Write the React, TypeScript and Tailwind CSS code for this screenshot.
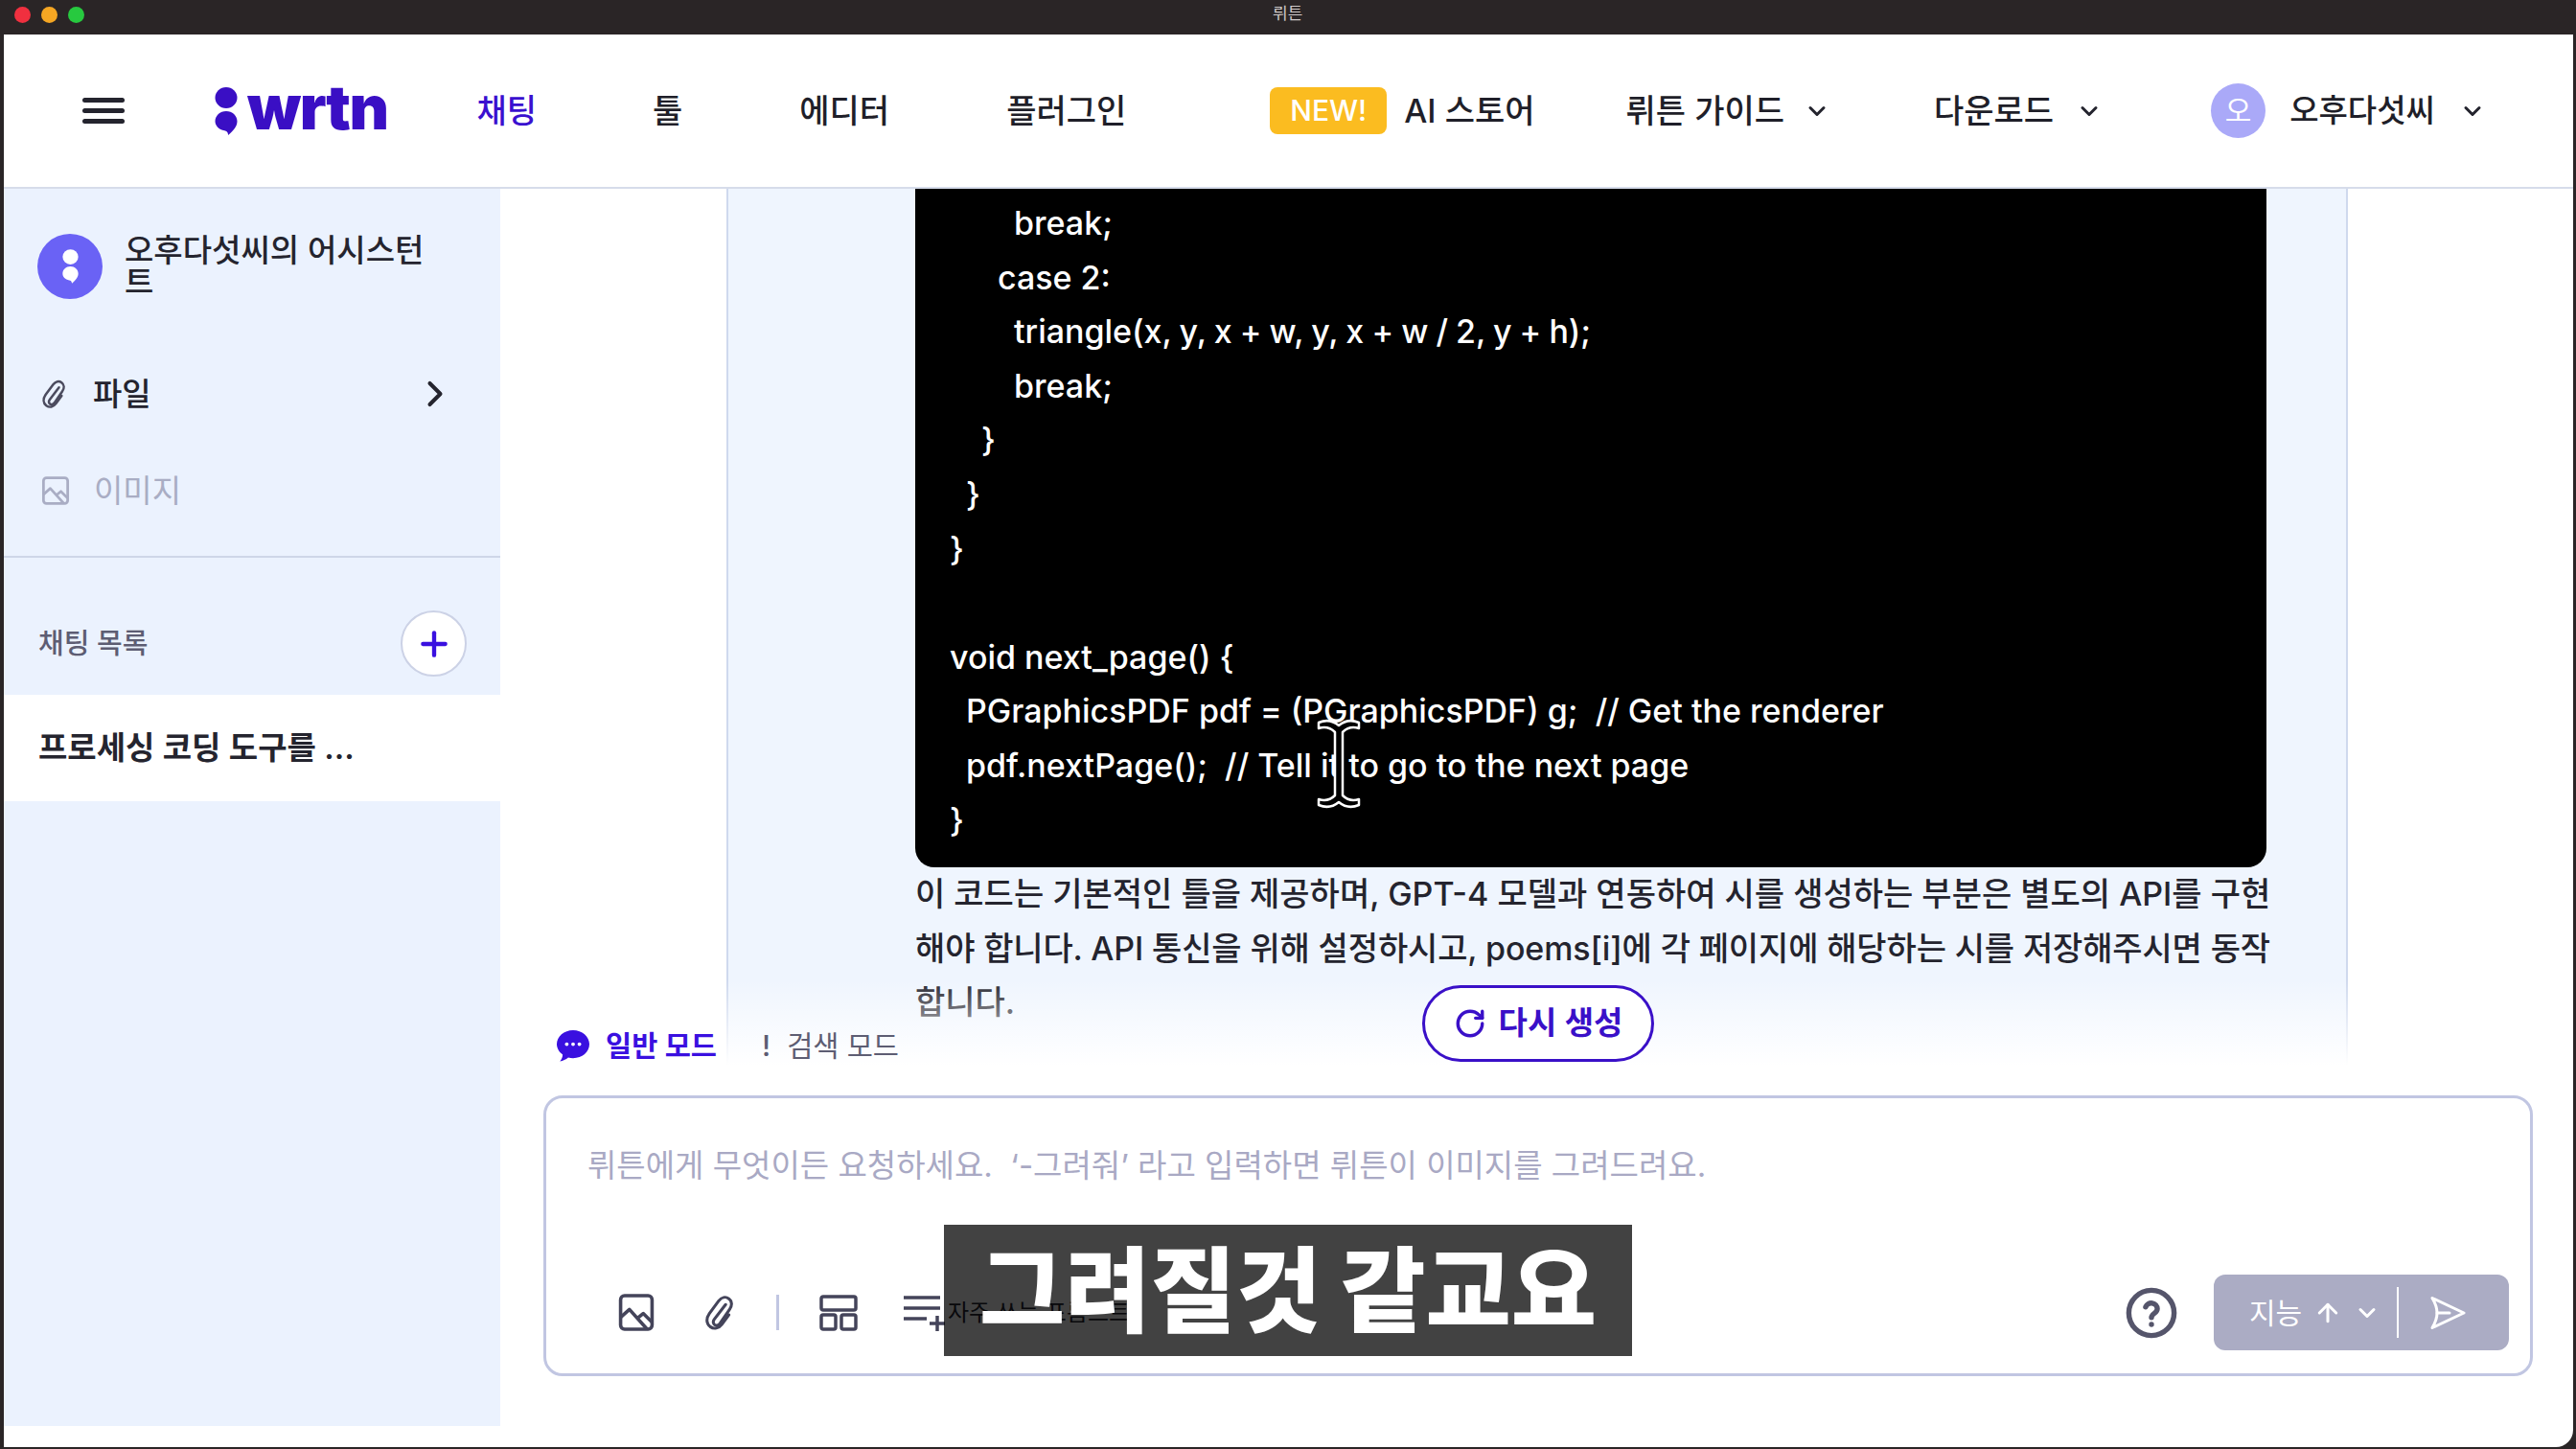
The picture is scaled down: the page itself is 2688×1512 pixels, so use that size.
import { ChevronDown, ChevronRight, Plus, RotateCw, ArrowUp } from 'lucide-react';

const FONT = 'font-["Inter","Noto_Sans_CJK_KR",sans-serif]';

const codeLines = [
  { text: 'break;', indent: 'pl-[67px]' },
  { text: 'case 2:', indent: 'pl-[50px]' },
  { text: 'triangle(x, y, x + w, y, x + w / 2, y + h);', indent: 'pl-[67px] [word-spacing:-1px]' },
  { text: 'break;', indent: 'pl-[67px]' },
  { text: '}', indent: 'pl-[33px]' },
  { text: '}', indent: 'pl-[17px]' },
  { text: '}', indent: 'pl-0' },
  { text: '\u00a0', indent: 'pl-0' },
  { text: 'void next_page() {', indent: 'pl-0' },
  { text: 'PGraphicsPDF pdf = (PGraphicsPDF) g;  // Get the renderer', indent: 'pl-[17px]' },
  { text: 'pdf.nextPage();  // Tell it to go to the next page', indent: 'pl-[17px]' },
  { text: '}', indent: 'pl-0' },
];

function Comma({ className, fill }: { className: string; fill: string }) {
  return (
    <svg viewBox="0 0 24 50" className={className} fill={fill}>
      <ellipse cx="12" cy="11" rx="11.5" ry="11" />
      <path d="M12 25c6.400 0 11.500 4.800 11.500 10.600 0 5.400-4 10-9.300 14.400-.5-3.300-1.700-4.400-4-4.700C4.300 44.300.5 40.300.5 35.600.5 29.800 5.600 25 12 25z" />
    </svg>
  );
}

function ImageIcon({ className, color }: { className: string; color: string }) {
  return (
    <svg viewBox="0 0 36 38" className={className} fill="none" stroke={color} strokeWidth="3.500" strokeLinejoin="round">
      <rect x="2" y="2" width="32" height="34" rx="4" />
      <path d="M2 24l9-8 18 20M19 25l6-5 9 9" />
    </svg>
  );
}

function ClipIcon({ className, color }: { className: string; color: string }) {
  return (
    <svg viewBox="0 0 30 38" className={className} fill="none" stroke={color} strokeWidth="3" strokeLinecap="round">
      <path d="M21 11L9.500 26c-1.800 2.400-1 4.600.5 5.600 1.600 1 3.700.6 5.300-1.500L25 16c3-4 2.500-8.500-.7-11-3.300-2.400-7.500-1.500-10.300 2.200L4.500 20c-3.500 5-3.200 10.500.8 13.500 4 2.800 8.800 1.800 12-2.500l7-9.500" />
    </svg>
  );
}

function NavItem({ label, className }: { label: string; className: string }) {
  return <span className={`text-[34px] font-medium leading-none text-[#1f1f29] ${className}`}>{label}</span>;
}

export default function App() {
  return (
    <div className={`relative flex h-[1512px] w-[2688px] flex-col overflow-hidden bg-[#2a2526] ${FONT}`}>
      {/* title bar */}
      <div className="relative flex h-9 shrink-0 items-center gap-[11px] pb-[5px] pl-[15px]">
        <span className="h-[17px] w-[17px] rounded-full bg-[#f0303f]" />
        <span className="h-[17px] w-[17px] rounded-full bg-[#f5a623]" />
        <span className="h-[17px] w-[17px] rounded-full bg-[#27c93f]" />
        <span className="absolute left-[1328px] top-[2px] text-[17px] leading-6 text-[#cfc9c9]">뤼튼</span>
      </div>

      <div className="ml-1 mr-[3px] flex h-[1474px] flex-col overflow-hidden rounded-br-[18px] bg-white">
        {/* header */}
        <header className="flex h-[161px] shrink-0 items-center border-b-2 border-[#d6dcea] bg-white">
          <div className="ml-[82px] flex h-[27px] w-11 flex-col justify-between">
            <span className="h-[5px] rounded-full bg-[#24242e]" />
            <span className="h-[5px] rounded-full bg-[#24242e]" />
            <span className="h-[5px] rounded-full bg-[#24242e]" />
          </div>
          <div className="ml-[94px] flex items-center">
            <Comma className="h-[50px] w-6" fill="#3a0fc4" />
            <span className="ml-[10px] mb-[8px] text-[64px] font-black leading-none tracking-[-1.500px] text-[#3a0fc4]">wrtn</span>
          </div>
          <span className="ml-[93px] text-[34px] font-medium leading-none text-[#3a10cf]">채팅</span>
          <NavItem label="툴" className="ml-[121px]" />
          <NavItem label="에디터" className="ml-[122px]" />
          <NavItem label="플러그인" className="ml-[122px]" />
          <span className="ml-[150px] flex h-[49px] w-[122px] items-center justify-center rounded-[8px] bg-[#fbbc20] text-[30px] font-medium text-white">NEW!</span>
          <NavItem label="AI 스토어" className="ml-[18px]" />
          <NavItem label="뤼튼 가이드" className="ml-[95px]" />
          <ChevronDown className="ml-[20px] h-7 w-7 text-[#24242e]" strokeWidth={2.600} />
          <NavItem label="다운로드" className="ml-[108px]" />
          <ChevronDown className="ml-[23px] h-7 w-7 text-[#24242e]" strokeWidth={2.600} />
          <span className="ml-[113px] flex h-[57px] w-[57px] items-center justify-center rounded-full bg-[#aaa9f8] text-[30px] text-white">오</span>
          <span className="ml-[25px] text-[33px] font-medium leading-none text-[#1f1f29]">오후다섯씨</span>
          <ChevronDown className="ml-[25px] h-7 w-7 text-[#24242e]" strokeWidth={2.600} />
        </header>

        <div className="flex flex-1">
          {/* sidebar */}
          <aside className="flex h-[1291px] w-[518px] shrink-0 flex-col bg-[#ebf2fe]">
            <div className="flex items-center pl-[35px] pt-[47px]">
              <span className="flex h-[68px] w-[68px] items-center justify-center rounded-full bg-[#6a62f5]">
                <Comma className="h-[36px] w-[17px]" fill="#ffffff" />
              </span>
              <p className="ml-[23px] w-[330px] text-[33px] font-medium leading-[33px] text-[#24242e]">오후다섯씨의 어시스턴트</p>
            </div>
            <div className="mt-[77px] flex items-center pl-[39px] pr-[46px]">
              <ClipIcon className="h-[32px] w-[27px]" color="#4b4b5e" />
              <span className="ml-[27px] text-[33px] font-medium leading-10 text-[#24242e]">파일</span>
              <ChevronRight className="ml-auto h-11 w-11 text-[#24242e]" strokeWidth={2.200} />
            </div>
            <div className="mt-[59px] flex items-center pl-[39px]">
              <ImageIcon className="h-[30px] w-[30px]" color="#a9adc4" />
              <span className="ml-[25px] text-[33px] leading-10 text-[#a9adc4]">이미지</span>
            </div>
            <div className="mt-[48px] border-t-2 border-[#ced6e8]" />
            <div className="flex h-[143px] items-center justify-between pl-[36px] pr-[35px] pt-[36px]">
              <span className="text-[29px] font-medium text-[#5d5d73]">채팅 목록</span>
              <span className="flex h-[69px] w-[69px] items-center justify-center rounded-full border-2 border-[#ccd2e6] bg-white">
                <Plus className="h-10 w-10 text-[#3a10e0]" strokeWidth={2.600} />
              </span>
            </div>
            <div className="flex h-[111px] items-center bg-white pl-[36px] text-[33px] font-semibold text-[#24242e]">
              프로세싱 코딩 도구를 ...
            </div>
          </aside>

          {/* main */}
          <main className="flex min-w-0 flex-1 flex-col">
            <div className="relative h-[915px] shrink-0 overflow-hidden">
              <div className="ml-[236px] h-full w-[1692px] border-x-2 border-[#cfd9ee] bg-[#eff5fe] pl-[195px]">
                <div className="w-[1410px] rounded-b-[20px] bg-black pb-[21px] pl-[36px] pt-[8px]">
                  {codeLines.map((line, i) => (
                    <div key={i} className={`h-[56.600px] whitespace-pre text-[34px] font-medium leading-[56.600px] text-white ${line.indent}`}>
                      {line.text}
                    </div>
                  ))}
                </div>
                <div className="w-[1410px] text-[34px] font-medium leading-[56.500px] text-[#24242e]">
                  <p className="whitespace-nowrap">이 코드는 기본적인 틀을 제공하며, GPT-4 모델과 연동하여 시를 생성하는 부분은 별도의 API를 구현</p>
                  <p className="whitespace-nowrap tracking-[-0.140px]">해야 합니다. API 통신을 위해 설정하시고, poems[i]에 각 페이지에 해당하는 시를 저장해주시면 동작</p>
                  <p>합니다.</p>
                </div>
              </div>
              <div className="absolute inset-x-0 bottom-0 h-[90px] bg-linear-to-b from-white/0 to-white" />
              <div className="absolute bottom-[1px] left-[57px] flex items-center">
                <svg viewBox="0 0 38 36" className="h-[34px] w-[38px]">
                  <path d="M19 1c10 0 18 6.800 18 15.500S29 32 19 32c-2 0-3.600-.2-5.300-.7C11 33.500 8 35 4.500 35.500 6.500 33 7.400 30.500 7.500 28 3.500 25.200 1 21 1 16.500 1 7.800 9 1 19 1z" fill="#3a10e0" />
                  <circle cx="12" cy="16.500" r="2" fill="#fff" />
                  <circle cx="19" cy="16.500" r="2" fill="#fff" />
                  <circle cx="26" cy="16.500" r="2" fill="#fff" />
                </svg>
                <span className="ml-[15px] text-[29.500px] font-semibold leading-10 text-[#3a10e0]">일반 모드</span>
                <span className="ml-[47px] text-[30px] font-medium leading-10 text-[#5d5d73]">!</span>
                <span className="ml-[17px] text-[29.500px] leading-10 text-[#5d5d73]">검색 모드</span>
              </div>
              <div className="absolute bottom-[4px] left-[962px] flex h-[80px] w-[242px] items-center justify-center gap-[13px] rounded-full border-[3px] border-[#3a10c8] bg-white">
                <RotateCw className="h-[34px] w-[34px] text-[#3a10c8]" strokeWidth={2.400} />
                <span className="text-[33px] font-semibold text-[#3a10c8]">다시 생성</span>
              </div>
            </div>

            {/* prompt box */}
            <div className="ml-[45px] mr-[42px] mt-[31px] flex h-[293px] flex-col rounded-[20px] border-[3px] border-[#c1c6e2] bg-white">
              <p className="ml-[43px] mt-[50px] whitespace-pre text-[33px] leading-10 text-[#a9a9c4]">
                뤼튼에게 무엇이든 요청하세요.  ‘-그려줘’ 라고 입력하면 뤼튼이 이미지를 그려드려요.
              </p>
              <div className="mt-auto mb-[24px] flex items-center pl-[75px] pr-[22px]">
                <ImageIcon className="h-[39px] w-[38px]" color="#44445a" />
                <ClipIcon className="ml-[51px] h-[39px] w-[34px]" color="#44445a" />
                <span className="ml-[42px] h-[37px] w-[3px] bg-[#c1c6e2]" />
                <svg viewBox="0 0 40 38" className="ml-[42px] h-[38px] w-[40px]" fill="none" stroke="#44445a" strokeWidth="3.500">
                  <rect x="2" y="2" width="36" height="14" rx="2" />
                  <rect x="2" y="21" width="15" height="15" rx="2" />
                  <rect x="23" y="21" width="15" height="15" rx="2" />
                </svg>
                <svg viewBox="0 0 44 38" className="ml-[47px] h-[38px] w-[44px]" fill="none" stroke="#44445a" strokeWidth="3.500">
                  <path d="M1 3h38M1 14h38M1 25h24M36 22v16M28 30h16" />
                </svg>
                <span className="ml-[3px] text-[24px] leading-none text-[#24242e]">자주 쓰는 프롬프트</span>
                <svg viewBox="0 0 24 24" className="ml-auto h-[54px] w-[54px]" fill="none" stroke="#55556b" strokeWidth="2.400" strokeLinecap="round" strokeLinejoin="round">
                  <circle cx="12" cy="12" r="10.500" />
                  <path d="M9.300 9.200a2.800 2.800 0 0 1 5.400.9c0 1.900-2.700 2.300-2.700 4" />
                  <path d="M12 17.300h.01" />
                </svg>
                <div className="ml-[38px] flex h-[79px] w-[308px] items-center rounded-[12px] bg-[#abacc4] text-white">
                  <span className="ml-[37px] text-[30px] leading-none">지능</span>
                  <ArrowUp className="ml-[12px] h-[30px] w-[30px]" strokeWidth={2.400} />
                  <ChevronDown className="ml-[12px] h-7 w-7" strokeWidth={2.600} />
                  <span className="ml-[17px] h-[53px] w-[2px] bg-white" />
                  <svg viewBox="0 0 38 36" className="ml-[32px] h-[36px] w-[38px]" fill="none" stroke="#fff" strokeWidth="3" strokeLinejoin="round" strokeLinecap="round">
                    <path d="M3 2.500L36 18 3 33.500c3-5 5-10 5-15.500S6 7.500 3 2.500z" />
                    <path d="M8 18h13" />
                  </svg>
                </div>
              </div>
            </div>
          </main>
        </div>
      </div>

      {/* text cursor, over the code */}
      <svg viewBox="0 0 48 94" className="absolute left-[1373px] top-[750px] h-[94px] w-[48px]" fill="#000" stroke="#fff" strokeWidth="2.500" strokeLinejoin="round">
        <path d="M3 4c7-3 15-2 21 3 6-5 14-6 21-3v6c-6-2-12-1-17 4v66c5 5 11 6 17 4v6c-7 3-15 2-21-3-6 5-14 6-21 3v-6c6 2 12 1 17-4V14c-5-5-11-6-17-4z" />
      </svg>

      {/* video caption */}
      <div className="absolute left-[985px] top-[1278px] flex h-[137px] w-[718px] items-center justify-center bg-black/[0.74]">
        <span className="whitespace-nowrap text-[97px] font-black leading-none text-white">그려질것 같교요</span>
      </div>
    </div>
  );
}
